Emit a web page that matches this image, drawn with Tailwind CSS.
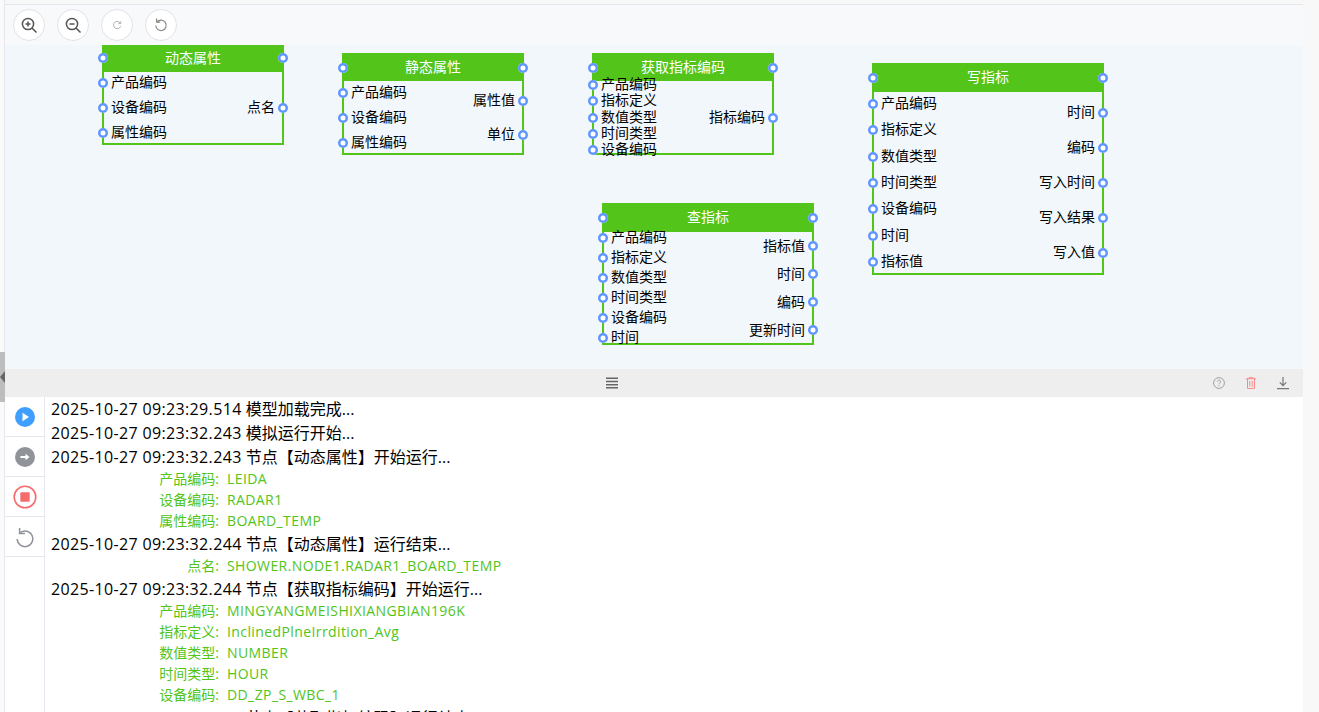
<!DOCTYPE html>
<html><head><meta charset="utf-8"><script src="https://cdn.jsdelivr.net/npm/@tailwindcss/browser@4"></script></head>
<body class="m-0 overflow-hidden bg-white">
<div class="w-[1319px] h-[712px] flex overflow-hidden bg-[#f8f8f8] font-['Open_Sans','Noto_Sans_CJK_SC',sans-serif] text-black">
  <!-- left rail -->
  <div class="w-[5px] shrink-0 h-full flex flex-col bg-[#fafafa] border-r border-[#e4e7ed] relative">
    <div class="absolute left-0 top-[352px] w-[5px] h-[50px] bg-[#bdbdbd]"></div>
    <div class="absolute left-0 top-[371px] w-0 h-0 border-y-[6px] border-y-transparent border-r-[5px] border-r-[#666]"></div>
  </div>
  <!-- main -->
  <div class="w-[1298px] shrink-0 h-full flex flex-col">
    <div class="h-[5px] shrink-0 bg-[#f8f8f8] border-b border-[#e4e7ed]"></div>
    <div class="h-[40px] shrink-0 bg-[#f8f9fb] flex items-center gap-3 pl-2">
      <div class="w-8 h-8 rounded-full bg-white border border-[#e2e3ea] flex items-center justify-center">
        <svg width="18" height="18" viewBox="0 0 18 18" fill="none" stroke="#555" stroke-width="1.5"><circle cx="8" cy="8" r="5.6"/><path d="M12 12l4.5 4.5M5.5 8h5M8 5.5v5"/></svg>
      </div>
      <div class="w-8 h-8 rounded-full bg-white border border-[#e2e3ea] flex items-center justify-center">
        <svg width="18" height="18" viewBox="0 0 18 18" fill="none" stroke="#555" stroke-width="1.5"><circle cx="8" cy="8" r="5.6"/><path d="M12 12l4.5 4.5M5.5 8h5"/></svg>
      </div>
      <div class="w-8 h-8 rounded-full bg-white border border-[#e2e3ea] flex items-center justify-center">
        <svg width="10" height="10" viewBox="0 0 12 12" fill="none" stroke="#aaa" stroke-width="1.1"><path d="M10 3.8A4.4 4.4 0 1 0 10.4 7.5"/><path d="M10.5 1.5v2.8H7.7"/></svg>
      </div>
      <div class="w-8 h-8 rounded-full bg-white border border-[#e2e3ea] flex items-center justify-center">
        <svg width="16" height="16" viewBox="0 0 16 16" fill="none" stroke="#888" stroke-width="1.2"><path d="M4 5a5.2 5.2 0 1 1-1.2 3.5"/><path d="M3.6 1.6V5.2h3.6"/></svg>
      </div>
    </div>
    <!-- canvas -->
    <div class="h-[324px] shrink-0 bg-[#f2f7fb] relative overflow-hidden text-[14px] leading-[20px]">

      <div class="absolute left-[97px] top-0 w-[182px] h-[100px] border-x-2 border-b-2 border-[#52c41a] flex flex-col">
        <div class="h-[27px] pb-[1px] shrink-0 -mx-[2px] bg-[#52c41a] text-white flex items-center justify-between">
          <i class="block w-[10px] h-[10px] rounded-full bg-white shadow-[inset_0_0_0_2.5px_#5f95ff] -ml-[4px]"></i><span class="-mt-[1px]">动态属性</span><i class="block w-[10px] h-[10px] rounded-full bg-white shadow-[inset_0_0_0_2.5px_#5f95ff] -mr-[4px]"></i>
        </div>
        <div class="flex justify-between flex-1">
          <div class="flex flex-col mt-[-2px]">
            <div class="h-[25px] flex items-center gap-[3px] -ml-[6px]"><i class="block w-[10px] h-[10px] rounded-full bg-white shadow-[inset_0_0_0_2.5px_#5f95ff]"></i><span class="-mt-[1px]">产品编码</span></div>
            <div class="h-[25px] flex items-center gap-[3px] -ml-[6px]"><i class="block w-[10px] h-[10px] rounded-full bg-white shadow-[inset_0_0_0_2.5px_#5f95ff]"></i><span class="-mt-[1px]">设备编码</span></div>
            <div class="h-[25px] flex items-center gap-[3px] -ml-[6px]"><i class="block w-[10px] h-[10px] rounded-full bg-white shadow-[inset_0_0_0_2.5px_#5f95ff]"></i><span class="-mt-[1px]">属性编码</span></div>
          </div>
          <div class="flex flex-col mt-[23px]">
            <div class="h-[25px] flex items-center gap-[3px] -mr-[6px]"><span class="-mt-[1px]">点名</span><i class="block w-[10px] h-[10px] rounded-full bg-white shadow-[inset_0_0_0_2.5px_#5f95ff]"></i></div>
          </div>
        </div>
      </div>

      <div class="absolute left-[337px] top-[8px] w-[182px] h-[102px] border-x-2 border-b-2 border-[#52c41a] flex flex-col">
        <div class="h-[28px] pt-[1px] shrink-0 -mx-[2px] bg-[#52c41a] text-white flex items-center justify-between">
          <i class="block w-[10px] h-[10px] rounded-full bg-white shadow-[inset_0_0_0_2.5px_#5f95ff] -ml-[4px]"></i><span class="-mt-[2px]">静态属性</span><i class="block w-[10px] h-[10px] rounded-full bg-white shadow-[inset_0_0_0_2.5px_#5f95ff] -mr-[4px]"></i>
        </div>
        <div class="flex justify-between flex-1">
          <div class="flex flex-col mt-[-1px]">
            <div class="h-[25px] flex items-center gap-[3px] -ml-[6px]"><i class="block w-[10px] h-[10px] rounded-full bg-white shadow-[inset_0_0_0_2.5px_#5f95ff]"></i><span class="-mt-[1px]">产品编码</span></div>
            <div class="h-[25px] flex items-center gap-[3px] -ml-[6px]"><i class="block w-[10px] h-[10px] rounded-full bg-white shadow-[inset_0_0_0_2.5px_#5f95ff]"></i><span class="-mt-[1px]">设备编码</span></div>
            <div class="h-[25px] flex items-center gap-[3px] -ml-[6px]"><i class="block w-[10px] h-[10px] rounded-full bg-white shadow-[inset_0_0_0_2.5px_#5f95ff]"></i><span class="-mt-[1px]">属性编码</span></div>
          </div>
          <div class="flex flex-col mt-[3px]">
            <div class="h-[34px] flex items-center gap-[3px] -mr-[6px] justify-end"><span class="-mt-[3px]">属性值</span><i class="block w-[10px] h-[10px] rounded-full bg-white shadow-[inset_0_0_0_2.5px_#5f95ff]"></i></div>
            <div class="h-[34px] flex items-center gap-[3px] -mr-[6px] justify-end"><span class="-mt-[3px]">单位</span><i class="block w-[10px] h-[10px] rounded-full bg-white shadow-[inset_0_0_0_2.5px_#5f95ff]"></i></div>
          </div>
        </div>
      </div>

      <div class="absolute left-[587px] top-[8px] w-[182px] h-[102px] border-x-2 border-b-2 border-[#52c41a] flex flex-col">
        <div class="h-[28px] pt-[1px] shrink-0 -mx-[2px] bg-[#52c41a] text-white flex items-center justify-between">
          <i class="block w-[10px] h-[10px] rounded-full bg-white shadow-[inset_0_0_0_2.5px_#5f95ff] -ml-[4px]"></i><span class="-mt-[2px]">获取指标编码</span><i class="block w-[10px] h-[10px] rounded-full bg-white shadow-[inset_0_0_0_2.5px_#5f95ff] -mr-[4px]"></i>
        </div>
        <div class="flex justify-between flex-1">
          <div class="flex flex-col mt-[-4px]">
            <div class="h-[16.3px] flex items-center gap-[3px] -ml-[6px]"><i class="block w-[10px] h-[10px] rounded-full bg-white shadow-[inset_0_0_0_2.5px_#5f95ff]"></i><span class="-mt-[2px]">产品编码</span></div>
            <div class="h-[16.3px] flex items-center gap-[3px] -ml-[6px]"><i class="block w-[10px] h-[10px] rounded-full bg-white shadow-[inset_0_0_0_2.5px_#5f95ff]"></i><span class="-mt-[2px]">指标定义</span></div>
            <div class="h-[16.3px] flex items-center gap-[3px] -ml-[6px]"><i class="block w-[10px] h-[10px] rounded-full bg-white shadow-[inset_0_0_0_2.5px_#5f95ff]"></i><span class="-mt-[2px]">数值类型</span></div>
            <div class="h-[16.3px] flex items-center gap-[3px] -ml-[6px]"><i class="block w-[10px] h-[10px] rounded-full bg-white shadow-[inset_0_0_0_2.5px_#5f95ff]"></i><span class="-mt-[2px]">时间类型</span></div>
            <div class="h-[16.3px] flex items-center gap-[3px] -ml-[6px]"><i class="block w-[10px] h-[10px] rounded-full bg-white shadow-[inset_0_0_0_2.5px_#5f95ff]"></i><span class="-mt-[2px]">设备编码</span></div>
          </div>
          <div class="flex flex-col mt-[24px]">
            <div class="h-[25px] flex items-center gap-[3px] -mr-[6px]"><span class="-mt-[1px]">指标编码</span><i class="block w-[10px] h-[10px] rounded-full bg-white shadow-[inset_0_0_0_2.5px_#5f95ff]"></i></div>
          </div>
        </div>
      </div>

      <div class="absolute left-[597px] top-[158px] w-[212px] h-[142px] border-x-2 border-b-2 border-[#52c41a] flex flex-col">
        <div class="h-[29px] shrink-0 -mx-[2px] bg-[#52c41a] text-white flex items-center justify-between">
          <i class="block w-[10px] h-[10px] rounded-full bg-white shadow-[inset_0_0_0_2.5px_#5f95ff] -ml-[4px]"></i><span class="-mt-[2px]">查指标</span><i class="block w-[10px] h-[10px] rounded-full bg-white shadow-[inset_0_0_0_2.5px_#5f95ff] -mr-[4px]"></i>
        </div>
        <div class="flex justify-between flex-1">
          <div class="flex flex-col mt-[-4px]">
            <div class="h-[20px] flex items-center gap-[3px] -ml-[6px]"><i class="block w-[10px] h-[10px] rounded-full bg-white shadow-[inset_0_0_0_2.5px_#5f95ff]"></i><span class="-mt-[2px]">产品编码</span></div>
            <div class="h-[20px] flex items-center gap-[3px] -ml-[6px]"><i class="block w-[10px] h-[10px] rounded-full bg-white shadow-[inset_0_0_0_2.5px_#5f95ff]"></i><span class="-mt-[2px]">指标定义</span></div>
            <div class="h-[20px] flex items-center gap-[3px] -ml-[6px]"><i class="block w-[10px] h-[10px] rounded-full bg-white shadow-[inset_0_0_0_2.5px_#5f95ff]"></i><span class="-mt-[2px]">数值类型</span></div>
            <div class="h-[20px] flex items-center gap-[3px] -ml-[6px]"><i class="block w-[10px] h-[10px] rounded-full bg-white shadow-[inset_0_0_0_2.5px_#5f95ff]"></i><span class="-mt-[2px]">时间类型</span></div>
            <div class="h-[20px] flex items-center gap-[3px] -ml-[6px]"><i class="block w-[10px] h-[10px] rounded-full bg-white shadow-[inset_0_0_0_2.5px_#5f95ff]"></i><span class="-mt-[2px]">设备编码</span></div>
            <div class="h-[20px] flex items-center gap-[3px] -ml-[6px]"><i class="block w-[10px] h-[10px] rounded-full bg-white shadow-[inset_0_0_0_2.5px_#5f95ff]"></i><span class="-mt-[2px]">时间</span></div>
          </div>
          <div class="flex flex-col">
            <div class="h-[28px] flex items-center gap-[3px] -mr-[6px] justify-end"><span class="-mt-[1px]">指标值</span><i class="block w-[10px] h-[10px] rounded-full bg-white shadow-[inset_0_0_0_2.5px_#5f95ff]"></i></div>
            <div class="h-[28px] flex items-center gap-[3px] -mr-[6px] justify-end"><span class="-mt-[1px]">时间</span><i class="block w-[10px] h-[10px] rounded-full bg-white shadow-[inset_0_0_0_2.5px_#5f95ff]"></i></div>
            <div class="h-[28px] flex items-center gap-[3px] -mr-[6px] justify-end"><span class="-mt-[1px]">编码</span><i class="block w-[10px] h-[10px] rounded-full bg-white shadow-[inset_0_0_0_2.5px_#5f95ff]"></i></div>
            <div class="h-[28px] flex items-center gap-[3px] -mr-[6px] justify-end"><span class="-mt-[1px]">更新时间</span><i class="block w-[10px] h-[10px] rounded-full bg-white shadow-[inset_0_0_0_2.5px_#5f95ff]"></i></div>
          </div>
        </div>
      </div>

      <div class="absolute left-[867px] top-[18px] w-[232px] h-[212px] border-x-2 border-b-2 border-[#52c41a] flex flex-col">
        <div class="h-[29px] shrink-0 -mx-[2px] bg-[#52c41a] text-white flex items-center justify-between">
          <i class="block w-[10px] h-[10px] rounded-full bg-white shadow-[inset_0_0_0_2.5px_#5f95ff] -ml-[4px]"></i><span class="-mt-[2px]">写指标</span><i class="block w-[10px] h-[10px] rounded-full bg-white shadow-[inset_0_0_0_2.5px_#5f95ff] -mr-[4px]"></i>
        </div>
        <div class="flex justify-between flex-1">
          <div class="flex flex-col mt-[-1px]">
            <div class="h-[26.3px] flex items-center gap-[3px] -ml-[6px]"><i class="block w-[10px] h-[10px] rounded-full bg-white shadow-[inset_0_0_0_2.5px_#5f95ff]"></i><span class="-mt-[2px]">产品编码</span></div>
            <div class="h-[26.3px] flex items-center gap-[3px] -ml-[6px]"><i class="block w-[10px] h-[10px] rounded-full bg-white shadow-[inset_0_0_0_2.5px_#5f95ff]"></i><span class="-mt-[2px]">指标定义</span></div>
            <div class="h-[26.3px] flex items-center gap-[3px] -ml-[6px]"><i class="block w-[10px] h-[10px] rounded-full bg-white shadow-[inset_0_0_0_2.5px_#5f95ff]"></i><span class="-mt-[2px]">数值类型</span></div>
            <div class="h-[26.3px] flex items-center gap-[3px] -ml-[6px]"><i class="block w-[10px] h-[10px] rounded-full bg-white shadow-[inset_0_0_0_2.5px_#5f95ff]"></i><span class="-mt-[2px]">时间类型</span></div>
            <div class="h-[26.3px] flex items-center gap-[3px] -ml-[6px]"><i class="block w-[10px] h-[10px] rounded-full bg-white shadow-[inset_0_0_0_2.5px_#5f95ff]"></i><span class="-mt-[2px]">设备编码</span></div>
            <div class="h-[26.3px] flex items-center gap-[3px] -ml-[6px]"><i class="block w-[10px] h-[10px] rounded-full bg-white shadow-[inset_0_0_0_2.5px_#5f95ff]"></i><span class="-mt-[2px]">时间</span></div>
            <div class="h-[26.3px] flex items-center gap-[3px] -ml-[6px]"><i class="block w-[10px] h-[10px] rounded-full bg-white shadow-[inset_0_0_0_2.5px_#5f95ff]"></i><span class="-mt-[2px]">指标值</span></div>
          </div>
          <div class="flex flex-col mt-[3px]">
            <div class="h-[35px] flex items-center gap-[3px] -mr-[6px] justify-end"><span class="-mt-[1px]">时间</span><i class="block w-[10px] h-[10px] rounded-full bg-white shadow-[inset_0_0_0_2.5px_#5f95ff]"></i></div>
            <div class="h-[35px] flex items-center gap-[3px] -mr-[6px] justify-end"><span class="-mt-[1px]">编码</span><i class="block w-[10px] h-[10px] rounded-full bg-white shadow-[inset_0_0_0_2.5px_#5f95ff]"></i></div>
            <div class="h-[35px] flex items-center gap-[3px] -mr-[6px] justify-end"><span class="-mt-[1px]">写入时间</span><i class="block w-[10px] h-[10px] rounded-full bg-white shadow-[inset_0_0_0_2.5px_#5f95ff]"></i></div>
            <div class="h-[35px] flex items-center gap-[3px] -mr-[6px] justify-end"><span class="-mt-[1px]">写入结果</span><i class="block w-[10px] h-[10px] rounded-full bg-white shadow-[inset_0_0_0_2.5px_#5f95ff]"></i></div>
            <div class="h-[35px] flex items-center gap-[3px] -mr-[6px] justify-end"><span class="-mt-[1px]">写入值</span><i class="block w-[10px] h-[10px] rounded-full bg-white shadow-[inset_0_0_0_2.5px_#5f95ff]"></i></div>
          </div>
        </div>
      </div>
    </div>
    <!-- splitter bar -->
    <div class="h-[28px] shrink-0 bg-[#eeeeee] relative flex items-center pl-[601px]">
      <svg width="12" height="12" viewBox="0 0 12 12" fill="#666"><path d="M0 .5h12V2H0zM0 3.7h12v1.5H0zM0 6.9h12v1.5H0zM0 10.1h12v1.5H0z"/></svg>
      <div class="absolute right-[13px] top-0 h-full flex items-center gap-[20px]">
        <svg width="12" height="12" viewBox="0 0 12 12" fill="none" stroke="#a0a0a0"><circle cx="6" cy="6" r="5.4"/><path d="M4.4 4.7a1.6 1.6 0 1 1 2.4 1.4c-.5.3-.8.6-.8 1.2M6 8.3v1"/></svg>
        <svg width="12" height="12" viewBox="0 0 12 12" fill="none" stroke="#f78989"><path d="M.8 1.8h10.4M4 1.8V.6h4v1.2M2.5 1.8v9.6h7V1.8M4.8 4v5.5M7.2 4v5.5"/></svg>
        <svg width="14" height="14" viewBox="0 0 14 14" fill="none" stroke="#777" stroke-width="1.2" class="-ml-[1px]"><path d="M7 1v8M3.8 6.4L7 9.6l3.2-3.2M1 12.6h12"/></svg>
      </div>
    </div>
    <!-- console -->
    <div class="flex-1 min-h-0 flex bg-white overflow-hidden">
      <div class="w-[40px] shrink-0 flex flex-col border-r border-[#e4e7ed] bg-white">
        <div class="h-[40px] shrink-0 border-b border-[#e4e7ed] flex items-center justify-center">
          <svg width="20" height="20" viewBox="0 0 20 20"><circle cx="10" cy="10" r="10" fill="#409eff"/><path d="M7.5 5.8L14 10l-6.5 4.2z" fill="#fff"/></svg>
        </div>
        <div class="h-[40px] shrink-0 border-b border-[#e4e7ed] flex items-center justify-center">
          <svg width="20" height="20" viewBox="0 0 20 20"><circle cx="10" cy="10" r="10" fill="#909399"/><path d="M5.5 9h5V6.8l4 3.2-4 3.2V11h-5z" fill="#fff"/></svg>
        </div>
        <div class="h-[40px] shrink-0 border-b border-[#e4e7ed] flex items-center justify-center">
          <svg width="24" height="24" viewBox="0 0 24 24"><circle cx="12" cy="12" r="10.8" fill="none" stroke="#f56c6c" stroke-width="1.6"/><rect x="7.3" y="7.3" width="9.4" height="9.4" rx="1" fill="#f56c6c"/></svg>
        </div>
        <div class="h-[40px] shrink-0 border-b border-[#e4e7ed] flex items-center justify-center">
          <svg width="20" height="22" viewBox="0 0 20 22" fill="none" stroke="#909399" stroke-width="1.5"><path d="M4.2 7.6a7.8 7.8 0 1 1-2 5.4"/><path d="M4.6 2v5.6h5.4"/></svg>
        </div>
      </div>
      <div class="flex-1 min-w-0 pl-[6px] text-[16px] leading-[24px]">
        <div><span class="tracking-[0.35px]">2025-10-27 09:23:29.514</span> 模型加载完成...</div>
        <div><span class="tracking-[0.35px]">2025-10-27 09:23:32.243</span> 模拟运行开始...</div>
        <div><span class="tracking-[0.35px]">2025-10-27 09:23:32.243</span> 节点【动态属性】开始运行...</div>
        <div class="flex h-[21px] text-[14px] leading-[21px] text-[#52c41a]"><span class="w-[176px] -mt-[1px] text-right pr-[8px]">产品编码:</span><span class="-mt-[1px] tracking-[0.4px]">LEIDA</span></div>
        <div class="flex h-[21px] text-[14px] leading-[21px] text-[#52c41a]"><span class="w-[176px] -mt-[1px] text-right pr-[8px]">设备编码:</span><span class="-mt-[1px] tracking-[0.4px]">RADAR1</span></div>
        <div class="flex h-[21px] text-[14px] leading-[21px] text-[#52c41a]"><span class="w-[176px] -mt-[1px] text-right pr-[8px]">属性编码:</span><span class="-mt-[1px] tracking-[0.4px]">BOARD_TEMP</span></div>
        <div><span class="tracking-[0.35px]">2025-10-27 09:23:32.244</span> 节点【动态属性】运行结束...</div>
        <div class="flex h-[21px] text-[14px] leading-[21px] text-[#52c41a]"><span class="w-[176px] -mt-[1px] text-right pr-[8px]">点名:</span><span class="-mt-[1px] tracking-[0.4px]">SHOWER.NODE1.RADAR1_BOARD_TEMP</span></div>
        <div><span class="tracking-[0.35px]">2025-10-27 09:23:32.244</span> 节点【获取指标编码】开始运行...</div>
        <div class="flex h-[21px] text-[14px] leading-[21px] text-[#52c41a]"><span class="w-[176px] -mt-[1px] text-right pr-[8px]">产品编码:</span><span class="-mt-[1px] tracking-[0.4px]">MINGYANGMEISHIXIANGBIAN196K</span></div>
        <div class="flex h-[21px] text-[14px] leading-[21px] text-[#52c41a]"><span class="w-[176px] -mt-[1px] text-right pr-[8px]">指标定义:</span><span class="-mt-[1px] tracking-[0.4px]">InclinedPlneIrrdition_Avg</span></div>
        <div class="flex h-[21px] text-[14px] leading-[21px] text-[#52c41a]"><span class="w-[176px] -mt-[1px] text-right pr-[8px]">数值类型:</span><span class="-mt-[1px] tracking-[0.4px]">NUMBER</span></div>
        <div class="flex h-[21px] text-[14px] leading-[21px] text-[#52c41a]"><span class="w-[176px] -mt-[1px] text-right pr-[8px]">时间类型:</span><span class="-mt-[1px] tracking-[0.4px]">HOUR</span></div>
        <div class="flex h-[21px] text-[14px] leading-[21px] text-[#52c41a]"><span class="w-[176px] -mt-[1px] text-right pr-[8px]">设备编码:</span><span class="-mt-[1px] tracking-[0.4px]">DD_ZP_S_WBC_1</span></div>
        <div><span class="tracking-[0.35px]">2025-10-27 09:23:32.245</span> 节点【获取指标编码】运行结束...</div>
      </div>
    </div>
  </div>
</div>
</body></html>
